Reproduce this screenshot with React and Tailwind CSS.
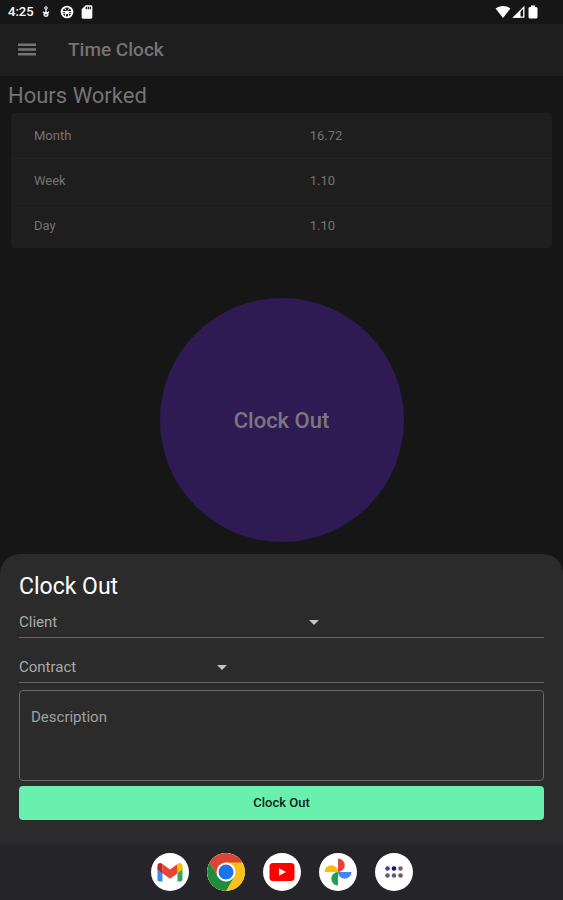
import { useState } from "react"
import { MdArrowDropDown, MdSdCard } from "react-icons/md"

const hours = [
    { label: "Month", value: "16.72" },
    { label: "Week", value: "1.10" },
    { label: "Day", value: "1.10" },
]

const StatusBar = () =>{
    return (
        <div className="h-6 flex items-center justify-between bg-[#161616] text-white pl-2 pr-6">
            <div className="flex items-center">
                <span className="text-[13px] leading-6 font-medium w-8">4:25</span>
                <svg viewBox="0 0 12 14" className="w-3 h-[14px]" fill="none" stroke="currentColor">
                    <circle cx="6" cy="3" r="1.2" strokeWidth="1.1" />
                    <path d="M6 4.200v4M3 6.800 6 9l3-2.200" strokeWidth="1.200" />
                    <circle cx="6" cy="9.200" r="1.900" strokeWidth="1.300" />
                </svg>
                <svg viewBox="0 0 14 14" className="w-[14px] h-[14px] ml-2" fill="none" stroke="currentColor">
                    <circle cx="7" cy="7" r="5.400" strokeWidth="1.900" />
                    <path d="M2 6.500h10M2 8.300h10M5.500 8.500v4M8.500 8.500v4M4.500 2.500 5.500 5M9.500 2.500 8.500 5" strokeWidth="1" />
                    <circle cx="7" cy="7.200" r="1.800" fill="currentColor" stroke="none" />
                </svg>
                <MdSdCard className="w-4 h-4 ml-[5px]" />
            </div>
            <div className="flex items-center gap-[1px]">
                <svg viewBox="0 0 16 14" className="w-4 h-[14px]" fill="currentColor">
                    <path d="M.6 3.6C2.600 1.900 5.200 1 8 1s5.400.9 7.400 2.600L8 13z" />
                </svg>
                <svg viewBox="0 0 14 14" className="w-[14px] h-[14px]" fill="none" stroke="currentColor">
                    <path d="M1.800 12.200 11.800 2.200v10z" strokeWidth="1.300" />
                    <path d="M1.800 12.200 8 6v6.200z" fill="currentColor" strokeWidth="1" />
                </svg>
                <svg viewBox="0 0 12 14" className="w-3 h-[14px]" fill="currentColor">
                    <path d="M4 .6h4v1.400h1q1.500 0 1.500 1.500v8.500q0 1.500-1.500 1.500H3q-1.500 0-1.500-1.500V3.500Q1.500 2 3 2h1z" />
                </svg>
            </div>
        </div>
    )
}

const HoursTable = () =>{
    return (
        <table className="w-full bg-[#1e1e1e] rounded text-left text-[13px] text-[#747474]">
            <tbody>
                {hours.map((row)=> (
                    <tr key={row.label} className="h-[45px] border-b border-[#222222] last:border-b-0">
                        <th className="w-[53%] pl-[23px] font-normal">{row.label}</th>
                        <td className="pl-3">{row.value}</td>
                    </tr>
                ))}
            </tbody>
        </table>
    )
}

const SelectField = ({ id, label, widthClass }) =>{
    return (
        <div className="h-[30px] border-b border-[#666666]">
            <div className={`grid items-center ${widthClass}`}>
                <select id={id} className="col-start-1 row-start-1 w-full h-7 appearance-none bg-transparent text-[15px] text-white focus:outline-none">
                    <option value=""></option>
                </select>
                <label htmlFor={id} className="col-start-1 row-start-1 text-[15px] leading-6 text-[#aaaaaa] pointer-events-none">{label}</label>
                <MdArrowDropDown className="col-start-1 row-start-1 justify-self-end w-6 h-6 text-[#c4c4c4] pointer-events-none" />
            </div>
        </div>
    )
}

const ClockOutSheet = () =>{
    const [description, setDescription] = useState("")

    return (
        <form className="bg-[#2b2b2b] rounded-t-[20px] px-[19px] pt-[17px] pb-6 flex flex-col" onSubmit={(e)=> e.preventDefault()}>
            <h2 className="text-[23px] leading-8 text-white mb-[5px]">Clock Out</h2>
            <div className="flex flex-col gap-[15px]">
                <SelectField id="client" label="Client" widthClass="w-[307px]" />
                <SelectField id="contract" label="Contract" widthClass="w-[215px]" />
            </div>
            <textarea
            value={description}
            onChange={(e)=> setDescription(e.target.value)}
            aria-label="Description"
            placeholder="Description"
            className="mt-[7px] h-[91px] resize-none rounded border border-[#6a6a6a] bg-transparent px-[11px] py-4 text-[15px] leading-5 text-white placeholder:text-[#a0a0a0] focus:outline-none"
            />
            <button type="submit" className="mt-[5px] h-[34px] rounded bg-[#69f0ae] text-[13px] font-medium text-[#10241a]">Clock Out</button>
        </form>
    )
}

const GmailIcon = () => (
    <svg viewBox="0 0 38 38" className="w-full h-full">
        <path d="M6.500 14v12.500q0 2 2 2h3V17z" fill="#4285f4" />
        <path d="M26.500 17v11.500h3q2 0 2-2V14z" fill="#34a853" />
        <path d="M11.500 11v9.200L19 25.800l7.500-5.600V11L19 16.600z" fill="#ea4335" />
        <path d="M6.500 12.600v3.800l5 3.800V11l-.7-.5c-1.800-1.300-4.300-.1-4.300 2.100z" fill="#c5221f" />
        <path d="M31.500 12.600v3.800l-5 3.800V11l.7-.5c1.800-1.300 4.300-.1 4.300 2.100z" fill="#fbbc04" />
    </svg>
)

const ChromeIcon = () => (
    <svg viewBox="0 0 38 38" className="w-full h-full">
        <circle cx="19" cy="19" r="19" fill="#fbc116" />
        <path d="M2.550 9.500A19 19 0 0 1 35.450 9.500H19L10.800 23.700z" fill="#db4437" />
        <path d="M2.550 9.500A19 19 0 0 0 19 38l8.200-14.250L19 28.500l-8.200-4.750z" fill="#1e8e3e" />
        <circle cx="19" cy="19" r="9.500" fill="#ffffff" />
        <circle cx="19" cy="19" r="7.500" fill="#1a73e8" />
    </svg>
)

const YoutubeIcon = () => (
    <svg viewBox="0 0 38 38" className="w-full h-full">
        <rect x="6.500" y="10" width="25" height="18" rx="3.500" fill="#ff0000" />
        <path d="M16 15.200v7.600l7-3.800z" fill="#ffffff" />
    </svg>
)

const PhotosIcon = () => (
    <svg viewBox="0 0 38 38" className="w-full h-full">
        <path d="M19 19V5.500a6.750 6.750 0 0 1 0 13.500z" fill="#ea4335" />
        <path d="M19 19h13.500a6.750 6.750 0 0 1-13.500 0z" fill="#4285f4" />
        <path d="M19 19v13.500a6.750 6.750 0 0 1 0-13.500z" fill="#1ea446" />
        <path d="M19 19H5.500a6.750 6.750 0 0 1 13.500 0z" fill="#fbbc04" />
    </svg>
)

const AppsIcon = () => (
    <svg viewBox="0 0 38 38" className="w-full h-full">
        <circle cx="12.500" cy="15.500" r="2.300" fill="#45457f" />
        <circle cx="19" cy="15.500" r="2.300" fill="#12127c" />
        <circle cx="25.500" cy="15.500" r="2.300" fill="#8a5570" />
        <circle cx="12.500" cy="22.500" r="2.300" fill="#5c5c7c" />
        <circle cx="19" cy="22.500" r="2.300" fill="#5c5c7c" />
        <circle cx="25.500" cy="22.500" r="2.300" fill="#5c5c7c" />
    </svg>
)

const dockApps = [
    { name: "Gmail", Icon: GmailIcon },
    { name: "Chrome", Icon: ChromeIcon },
    { name: "YouTube", Icon: YoutubeIcon },
    { name: "Photos", Icon: PhotosIcon },
    { name: "All apps", Icon: AppsIcon },
]

const Dock = () =>{
    return (
        <nav className="h-14 flex items-center justify-center gap-[18px] bg-[#252529]">
            {dockApps.map(({ name, Icon })=> (
                <button key={name} aria-label={name} className="w-[38px] h-[38px] rounded-full bg-white overflow-hidden">
                    <Icon />
                </button>
            ))}
        </nav>
    )
}

const App = () =>{
    return (
        <div className="min-h-screen flex flex-col bg-[#161616] font-['Roboto',sans-serif]">
            <StatusBar />
            <header className="h-[52px] flex items-center gap-[30px] px-4 bg-[#1e1e1e] text-[#747474]">
                <button aria-label="Menu">
                    <svg viewBox="0 0 22 22" className="w-[22px] h-[22px]" fill="currentColor">
                        <path d="M2 4.500h18v2.500H2zM2 9.300h18v2.500H2zM2 14.100h18v2.500H2z" />
                    </svg>
                </button>
                <h1 className="text-[19px] font-medium">Time Clock</h1>
            </header>
            <main className="flex-1 flex flex-col">
                <h2 className="px-2 pt-1 pb-px text-[22px] leading-8 text-[#747474]">Hours Worked</h2>
                <div className="px-[11px]">
                    <HoursTable />
                </div>
                <div className="flex-1 flex justify-center items-end pt-6 pb-3">
                    <button className="w-[244px] h-[244px] rounded-full bg-[#2f1b53] text-[22px] font-medium text-[#7c7680]">Clock Out</button>
                </div>
            </main>
            <ClockOutSheet />
            <Dock />
        </div>
    )
}

export default App
